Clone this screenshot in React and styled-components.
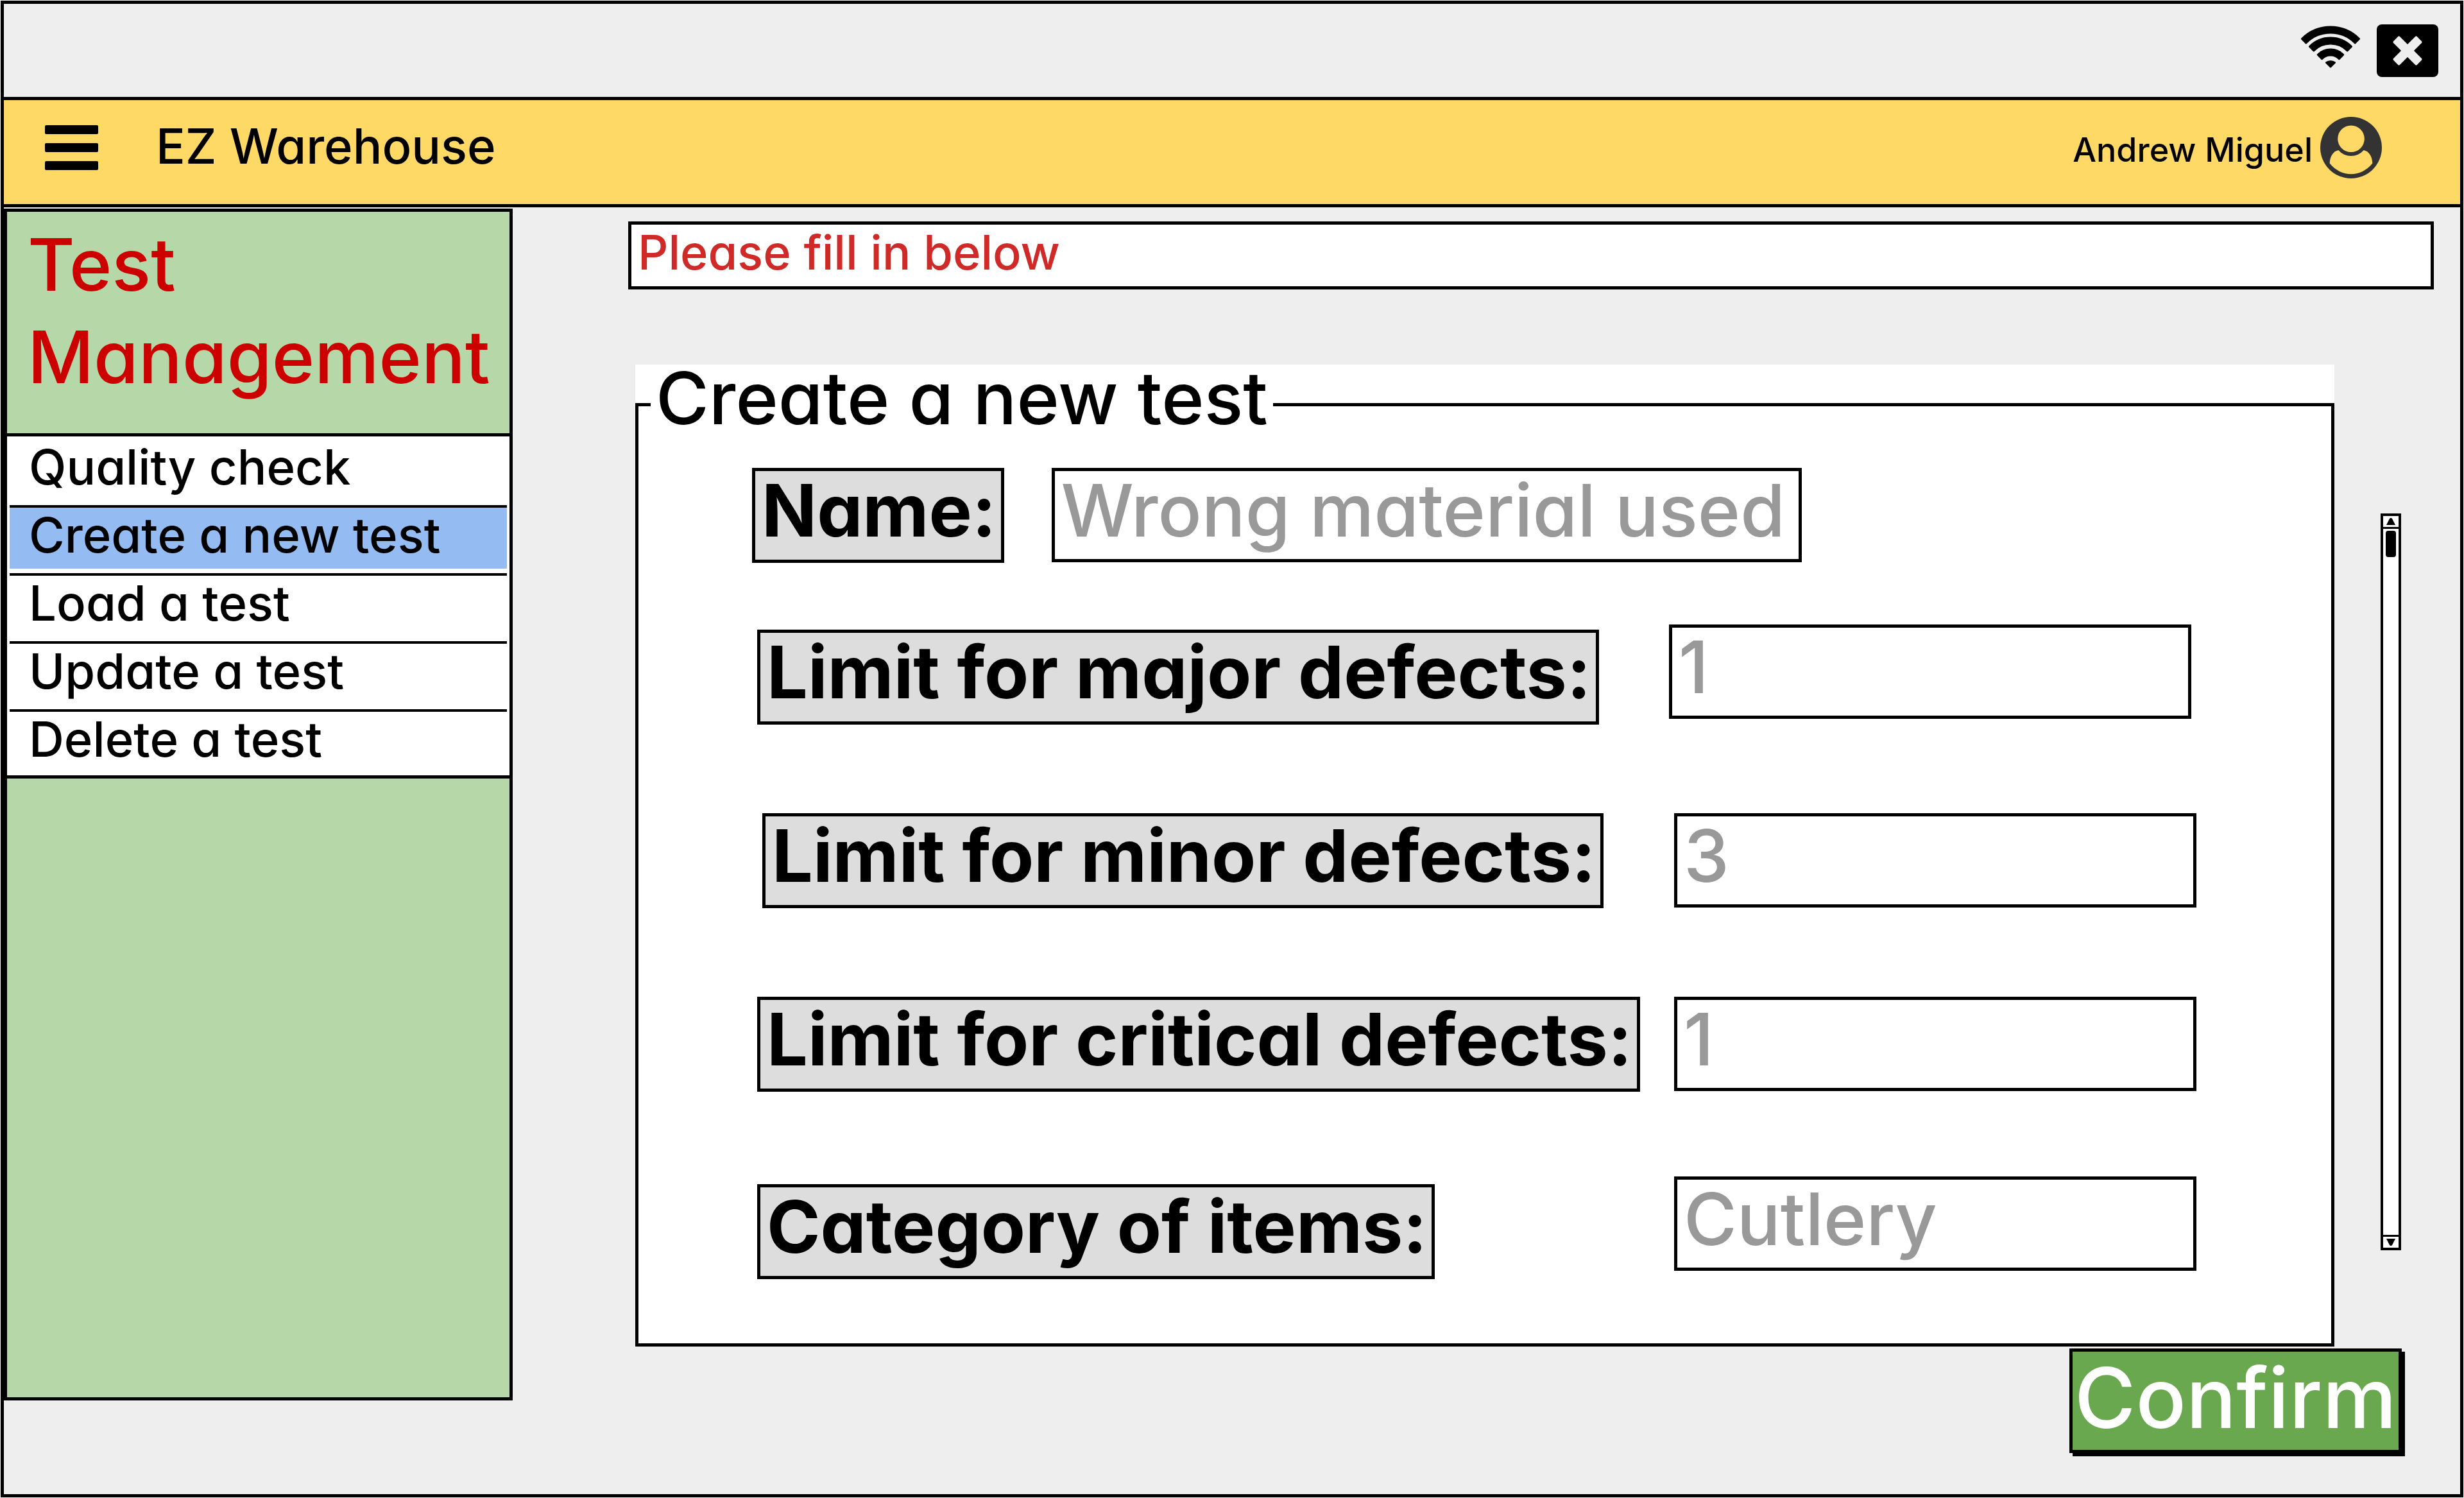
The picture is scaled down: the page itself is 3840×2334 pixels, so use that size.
import React from 'react';
import styled, { createGlobalStyle } from 'styled-components';

const GlobalStyle = createGlobalStyle`
  *, *::before, *::after { box-sizing: border-box; }
  body {
    margin: 0;
    padding: 1px;
    background: #fff;
    color: #000;
    font-family: Inter, Roboto, sans-serif;
    font-weight: 500;
    font-feature-settings: 'cv11' 1;
  }
  button, input {
    margin: 0;
    border: 0;
    border-radius: 0;
    font: inherit;
    font-feature-settings: inherit;
    color: inherit;
  }
`;

const line = '5px solid #000';

const Window = styled.div`
  display: flex;
  flex-direction: column;
  min-height: calc(100vh - 2px);
  border: ${line};
  background: #eee;
`;

const StatusBar = styled.div`
  display: flex;
  justify-content: flex-end;
  align-items: flex-start;
  gap: 26px;
  height: 145px;
  padding: 32px 34px 0 0;
`;

const IconButton = styled.button`
  display: flex;
  padding: 0;
  background: none;
`;

const Header = styled.header`
  display: flex;
  align-items: center;
  height: 172px;
  padding: 0 122px 14px 64px;
  border-top: ${line};
  border-bottom: ${line};
  background: #ffd966;
`;

const Brand = styled.h1`
  flex: 1;
  margin: 0 0 0 90px;
  padding-bottom: 6px;
  font-size: 76px;
  font-weight: 500;
  line-height: 92px;
`;

const User = styled.div`
  display: flex;
  align-items: center;
  gap: 12px;
`;

const UserName = styled.span`
  padding-top: 8px;
  font-size: 52px;
  line-height: 64px;
`;

const Body = styled.div`
  display: flex;
  flex: 1;
  padding-top: 2px;
`;

const Sidebar = styled.nav`
  flex: none;
  width: 793px;
  margin-bottom: 146px;
  border: ${line};
  background: #b6d7a8;
`;

const SidebarTitle = styled.h2`
  margin: 0;
  padding: 10px 0 47px 32px;
  color: #c00;
  font-size: 113px;
  font-weight: 500;
  line-height: 144px;
`;

const Menu = styled.ul`
  margin: 0 -5px;
  padding: 5px 4px 0;
  border: ${line};
  background: #fff;
  list-style: none;
`;

const MenuItem = styled.li`
  & + & {
    border-top: 4px solid #000;
  }
`;

const MenuLink = styled.a`
  display: block;
  margin-bottom: ${p => (p.$last ? 4 : 7)}px;
  padding: 0 0 11px 30px;
  background: ${p => (p.$active ? '#94bbf2' : 'transparent')};
  color: inherit;
  font-size: 76px;
  line-height: 84px;
  text-decoration: none;
`;

const Main = styled.main`
  display: flex;
  flex: 1;
  flex-direction: column;
  min-width: 0;
  padding: 20px 41px 0 180px;
`;

const Message = styled.div`
  padding: 0 10px 10px;
  border: ${line};
  background: #fff;
  color: #cf2a27;
  font-size: 74px;
  line-height: 86px;
`;

const Workspace = styled.div`
  display: flex;
  gap: 72px;
  margin-top: 117px;
  padding: 0 51px 0 11px;
`;

const Panel = styled.form`
  flex: 1;
  min-width: 0;
  background: #fff;
`;

const Fieldset = styled.fieldset`
  min-width: 0;
  margin: 0;
  padding: 0;
  border: ${line};
`;

const Legend = styled.legend`
  margin-left: 19px;
  padding: 0 8px 21px;
  font-size: 113px;
  line-height: 104px;
`;

const Fields = styled.div`
  display: flex;
  flex-direction: column;
  gap: ${p => p.$gap}px;
`;

const FormBody = styled(Fields)`
  padding: 36px 210px 100px 177px;
`;

const Field = styled.div`
  display: flex;
  justify-content: ${p => (p.$inline ? 'flex-start' : 'space-between')};
  gap: ${p => (p.$inline ? 74 : 24)}px;
  min-height: ${p => p.$height || 148}px;
  padding: 0 ${p => p.$end || 0}px 0 ${p => p.$start || 0}px;
`;

const Label = styled.label`
  flex: none;
  align-self: flex-end;
  padding: 0 7px 16px 10px;
  border: ${line};
  background: #ddd;
  font-size: 113px;
  font-weight: 700;
  line-height: 122px;
  white-space: nowrap;
`;

const TextInput = styled.input`
  flex: none;
  width: ${p => (p.$wide ? 1169 : 814)}px;
  height: 147px;
  padding: 0 10px 16px;
  border: ${line};
  background: #fff;
  font-size: 113px;
  line-height: 121px;

  &::placeholder {
    color: #999;
    opacity: 1;
  }
`;

const ScrollBar = styled.div`
  display: flex;
  flex: none;
  flex-direction: column;
  width: 32px;
  margin: 232px 0 150px;
  border: 4px solid #000;
  background: #fff;
`;

const ScrollTrack = styled.div`
  flex: 1;
  padding: 3px 4px;
  border-top: 3px solid #000;
  border-bottom: 3px solid #000;
`;

const ScrollThumb = styled.div`
  height: 41px;
  border-radius: 4px;
  background: #000;
`;

const ConfirmButton = styled.button`
  align-self: flex-end;
  margin: 3px 50px 0 0;
  padding: 0 3px 9px;
  border: ${line};
  background: #6aa84f;
  box-shadow: 5px 5px 0 #000;
  color: #fff;
  font-size: 130px;
  line-height: 144px;
`;

const wave = (outer, inner) => {
  const o = outer * Math.SQRT1_2;
  const i = inner * Math.SQRT1_2;
  return `M${46 - o} ${67 - o}A${outer} ${outer} 0 0 1 ${46 + o} ${67 - o}L${46 + i} ${67 - i}A${inner} ${inner} 0 0 0 ${46 - i} ${67 - i}Z`;
};

const WifiIcon = () => (
  <svg width="92" height="70" viewBox="0 0 92 70" role="img" aria-label="Wi-Fi" strokeWidth="3" stroke="#000" strokeLinejoin="round">
    <path d={wave(63, 54)} />
    <path d={wave(46, 37)} />
    <path d={wave(28, 19)} />
    <path d="M39.5 59.5Q46 56 52.5 59.5L46 66Z" />
  </svg>
);

const CloseIcon = () => (
  <svg width="96" height="82" viewBox="0 0 96 82" aria-hidden="true">
    <rect width="96" height="82" rx="8" />
    <g fill="#eee" transform="translate(48 41) rotate(45)">
      <rect x="-26" y="-7" width="52" height="14" rx="2" />
      <rect x="-7" y="-26" width="14" height="52" rx="2" />
    </g>
  </svg>
);

const MenuIcon = () => (
  <svg width="83" height="70" viewBox="0 0 83 70" aria-hidden="true">
    <rect width="83" height="14" rx="2" />
    <rect y="28" width="83" height="14" rx="2" />
    <rect y="56" width="83" height="14" rx="2" />
  </svg>
);

const AvatarIcon = () => (
  <svg width="96" height="96" viewBox="0 0 96 96" aria-hidden="true">
    <circle cx="48" cy="48" r="48" fill="#333" />
    <g fill="#ffd966">
      <circle cx="48" cy="34.3" r="20.8" />
      <path d="M28.3 52A26 26 0 0 0 67.7 52C76 53.5 81 62 81.3 72.5C72 84 60 89.3 48 89.3S24 84 14.7 72.5C15 62 20 53.5 28.3 52Z" />
    </g>
  </svg>
);

const ArrowIcon = ({ down }) => (
  <svg width="24" height="17" viewBox="0 0 24 17" aria-hidden="true">
    <path d={down ? 'M5 3H19L14 13Q12 15 10 13Z' : 'M5 14H19L14 4Q12 2 10 4Z'} />
  </svg>
);

const menu = ['Quality check', 'Create a new test', 'Load a test', 'Update a test', 'Delete a test'];

const limits = [
  { id: 'major', label: 'Limit for major defects:', hint: '1', height: 156, start: 8, end: 8 },
  { id: 'minor', label: 'Limit for minor defects:', hint: '3', start: 16 },
  { id: 'critical', label: 'Limit for critical defects:', hint: '1', start: 8 },
];

export default function App() {
  return (
    <>
      <GlobalStyle />
      <Window>
        <StatusBar>
          <WifiIcon />
          <IconButton type="button" aria-label="Close"><CloseIcon /></IconButton>
        </StatusBar>
        <Header>
          <IconButton type="button" aria-label="Menu"><MenuIcon /></IconButton>
          <Brand>EZ Warehouse</Brand>
          <User>
            <UserName>Andrew Miguel</UserName>
            <AvatarIcon />
          </User>
        </Header>
        <Body>
          <Sidebar>
            <SidebarTitle>Test Management</SidebarTitle>
            <Menu>
              {menu.map((item, i) => (
                <MenuItem key={item}>
                  <MenuLink href="#" $active={i === 1} $last={i === menu.length - 1} aria-current={i === 1 ? 'page' : undefined}>
                    {item}
                  </MenuLink>
                </MenuItem>
              ))}
            </Menu>
          </Sidebar>
          <Main>
            <Message role="status">Please fill in below</Message>
            <Workspace>
              <Panel id="new-test">
                <Fieldset>
                  <Legend>Create a new test</Legend>
                  <FormBody $gap={96}>
                    <Field $inline>
                      <Label htmlFor="name">Name:</Label>
                      <TextInput id="name" $wide placeholder="Wrong material used" />
                    </Field>
                    <Fields $gap={132}>
                      <Fields $gap={138}>
                        {limits.map(f => (
                          <Field key={f.id} $height={f.height} $start={f.start} $end={f.end}>
                            <Label htmlFor={f.id}>{f.label}</Label>
                            <TextInput id={f.id} placeholder={f.hint} />
                          </Field>
                        ))}
                      </Fields>
                      <Field $height={160} $start={8}>
                        <Label htmlFor="category">Category of items:</Label>
                        <TextInput id="category" placeholder="Cutlery" />
                      </Field>
                    </Fields>
                  </FormBody>
                </Fieldset>
              </Panel>
              <ScrollBar>
                <IconButton type="button" aria-label="Scroll up"><ArrowIcon /></IconButton>
                <ScrollTrack><ScrollThumb /></ScrollTrack>
                <IconButton type="button" aria-label="Scroll down"><ArrowIcon down /></IconButton>
              </ScrollBar>
            </Workspace>
            <ConfirmButton type="submit" form="new-test">Confirm</ConfirmButton>
          </Main>
        </Body>
      </Window>
    </>
  );
}
